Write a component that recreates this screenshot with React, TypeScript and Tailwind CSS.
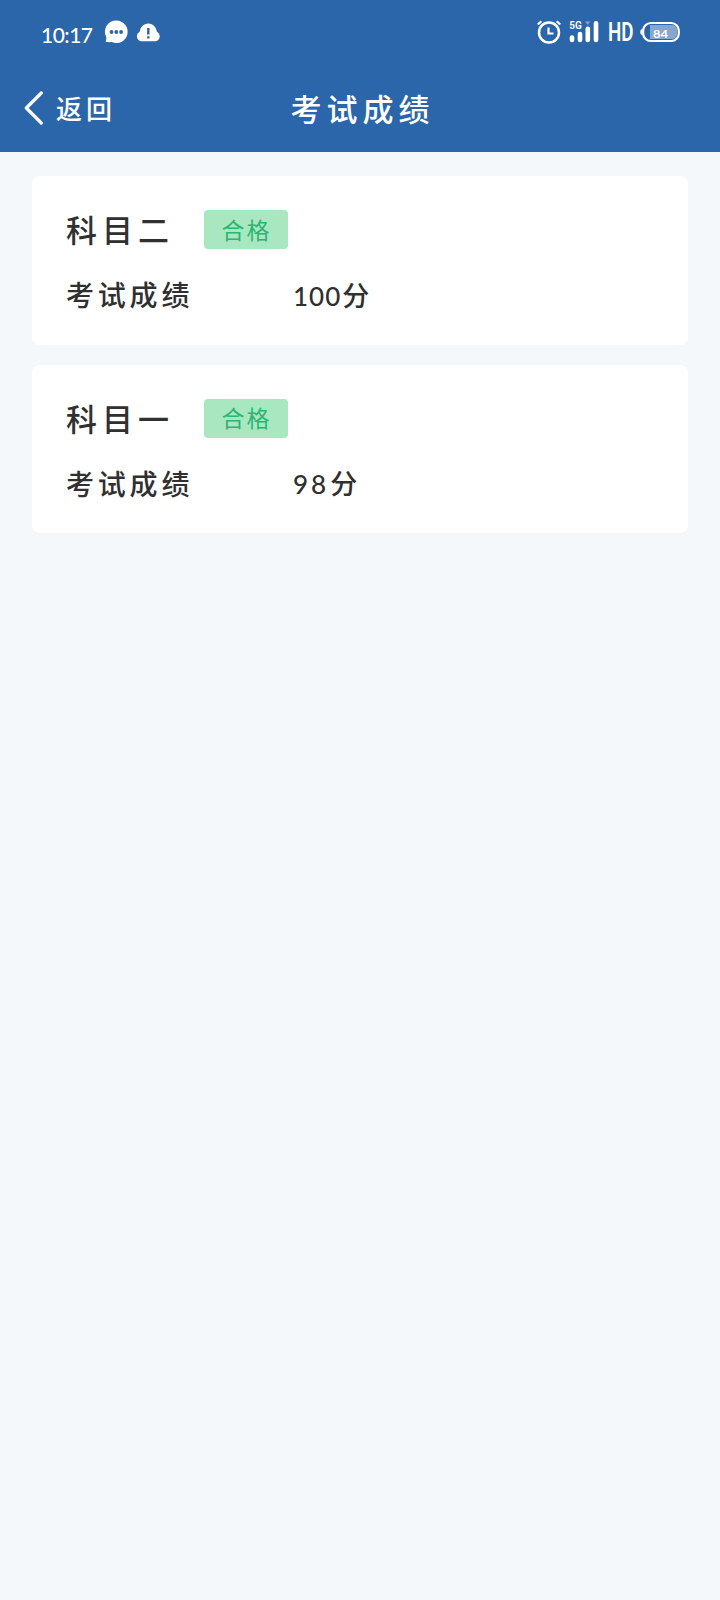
import React from 'react';

interface ExamResult {
  subject: string;
  status: string;
  score: string;
  unit: string;
}

const results: ExamResult[] = [
  { subject: '科目二', status: '合格', score: '100', unit: '分' },
  { subject: '科目一', status: '合格', score: '98', unit: '分' },
];

const StatusBar: React.FC = () => (
  <div className="flex h-16 items-center justify-between pl-[41px] pr-10">
    <div className="flex items-center">
      <span className="mt-[4px] w-[52px] text-[21px] font-medium leading-none tracking-[-0.5px]">10:17</span>
      {/* Message */}
      <svg className="ml-[11px] h-6 w-6" viewBox="0 0 24 24">
        <path d="M12.5.5a11.3 11.3 0 1 1-4.8 21.6c-2 .2-4.4.2-6.2-.3.8-1.3 1-3 .7-4.7A11.3 11.3 0 0 1 12.5.5Z" fill="#fff" />
        <g fill="#2c66aa">
          <circle cx="7.5" cy="12" r="1.9" />
          <circle cx="12.3" cy="12" r="1.9" />
          <circle cx="17.1" cy="12" r="1.9" />
        </g>
      </svg>
      {/* Cloud alert */}
      <svg className="ml-2 h-6 w-6" viewBox="0 0 24 24">
        <path d="M5 21.2A5 5 0 0 1 3.7 11.8C4.3 7.3 7.5 3.5 12.3 3.5s8 3.8 8.6 8.3a5 5 0 0 1-1.3 9.4Z" fill="#fff" />
        <path d="M12.3 8v6.5M12.3 16.3v2.2" stroke="#2c66aa" strokeWidth="2.4" />
      </svg>
    </div>
    <div className="flex items-center">
      {/* Alarm */}
      <svg className="h-6 w-6" viewBox="0 0 24 24" fill="none" stroke="#fff">
        <circle cx="12" cy="12.5" r="10" strokeWidth="2.5" />
        <path d="M11.5 7.5v6h5" strokeWidth="2.2" />
        <path d="M.8 4.5 4.3 1.2M23.2 4.5l-3.5-3.3" strokeWidth="2.2" />
      </svg>
      {/* Signal */}
      <svg className="ml-2 h-6 w-[30px]" viewBox="0 0 30 24">
        <text x="0.3" y="9.2" fill="#fff" fontSize="10.5" fontWeight="600" fontFamily="Roboto, sans-serif" textLength="12.5" lengthAdjust="spacingAndGlyphs">5G</text>
        <path d="m16 1.5 2.7 3.5 2.7-3.5Z" fill="#7fa4d0" />
        <path d="M3 17.5V20M11 14v6M18.8 8.8V20M27 3.3V20" stroke="#fff" strokeWidth="4.6" strokeLinecap="round" />
      </svg>
      <span className="-mr-1 ml-[9px] w-9 origin-left scale-x-[0.75] pt-[2px] font-[Roboto,sans-serif] text-[25px] font-semibold leading-9">HD</span>
      {/* Battery */}
      <svg className="h-6 w-10" viewBox="0 0 40 24">
        <path d="M3 8.5C1.3 9 .2 10.3.2 12s1.1 3 2.8 3.5Z" fill="#fff" />
        <rect x="3.2" y="3" width="35.6" height="18" rx="7.5" fill="none" stroke="#fff" strokeWidth="2.2" />
        <path d="M10 5h22.5c3 0 4.5 2.2 4.5 5v4c0 2.8-1.5 5-4.5 5H10Z" fill="#86a6d2" />
        <text x="13" y="17.7" fill="#fff" fontSize="12" fontWeight="700" fontFamily="Lato, sans-serif" textLength="15" lengthAdjust="spacingAndGlyphs">84</text>
      </svg>
    </div>
  </div>
);

const ResultCard: React.FC<{ result: ExamResult }> = ({ result }) => (
  <div className="h-[168.5px] rounded-lg bg-white pl-[34px] pt-[34px] font-medium text-[#303030]">
    <div className="flex h-[39px] items-center">
      <h2 className="w-[138px] pt-[2px] text-[31px] leading-none tracking-[5px]">{result.subject}</h2>
      <span className="flex h-[39px] w-[84px] items-center justify-center rounded-[4px] bg-[#a9e7c0] pl-px pt-px text-[23px] font-normal leading-none tracking-[2px] text-[#2bb673]">
        {result.status}
      </span>
    </div>
    <div className="mt-8 flex items-center leading-none">
      <span className="w-[227px] text-[28px] tracking-[3.8px]">考试成绩</span>
      <span className={`pt-px text-[26px] ${result.score.length > 2 ? 'tracking-[1px]' : 'tracking-[3px]'}`}>
        {result.score}
      </span>
      <span className="ml-px text-[27px]">{result.unit}</span>
    </div>
  </div>
);

const App: React.FC = () => {
  return (
    <div className="min-h-[1600px] w-[720px] bg-[#f4f8fa] font-[Lato,'Noto_Sans_CJK_SC',sans-serif]">
      <header className="h-[152px] bg-[#2c66aa] text-white">
        <StatusBar />
        <div className="grid h-[88px] grid-cols-[1fr_auto_1fr] items-center">
          <button className="flex items-center pl-6 text-left">
            <svg className="h-[34px] w-5" viewBox="0 0 20 34" fill="none" stroke="#fff" strokeWidth="3.2" strokeLinecap="round" strokeLinejoin="round">
              <path d="M17.3 2 2.3 17l15 15" />
            </svg>
            <span className="ml-3 pt-[2px] text-[26px] font-medium leading-none tracking-[4px]">返回</span>
          </button>
          <h1 className="pl-[5px] pt-[2px] text-[31px] font-medium leading-none tracking-[5px]">考试成绩</h1>
        </div>
      </header>
      <main className="flex flex-col gap-5 px-8 pt-6">
        {results.map((result) => (
          <ResultCard key={result.subject} result={result} />
        ))}
      </main>
    </div>
  );
};

export default App;
